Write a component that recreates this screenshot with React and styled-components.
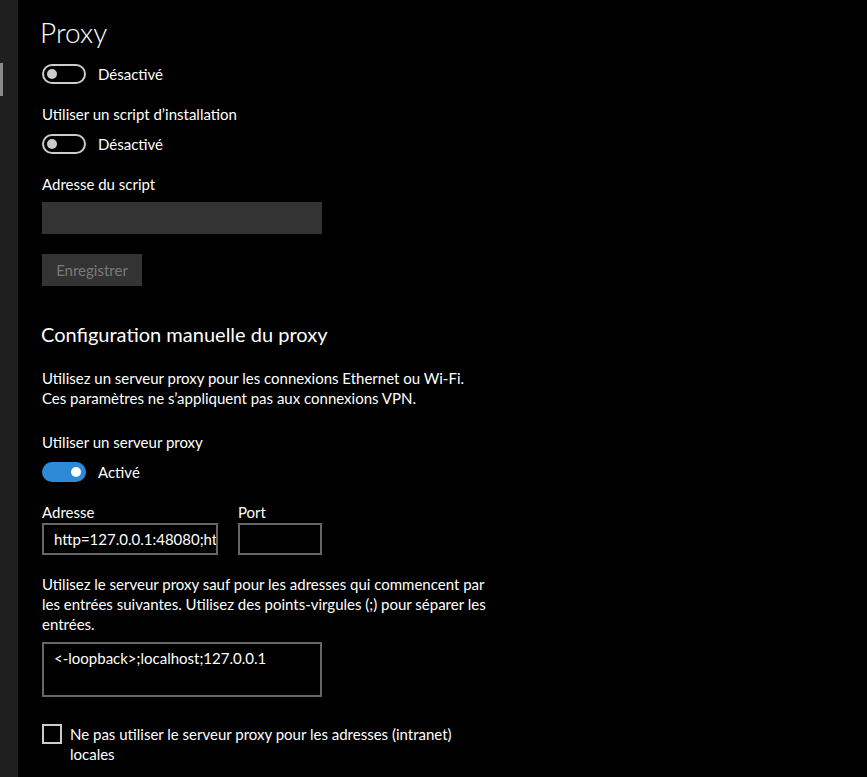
import React from "react";
import styled, { createGlobalStyle } from "styled-components";

const Global = createGlobalStyle`
  html, body { margin: 0; padding: 0; background: #000; }
  body { font-family: "Lato", "Open Sans", sans-serif; color: #fff; }
  * { box-sizing: border-box; }
`;

const Page = styled.div`
  display: flex;
  width: 867px;
  height: 777px;
  overflow: hidden;
  background: #000;
`;

const Sidebar = styled.div`
  width: 18px;
  flex: 0 0 18px;
  background: #1f1f1f;
  position: relative;
`;

const Indicator = styled.div`
  position: absolute;
  left: 0;
  top: 63px;
  width: 3px;
  height: 33px;
  background: #8a8a8a;
`;

const Main = styled.div`
  display: flex;
  flex-direction: column;
  align-items: flex-start;
  padding-left: 24px;
`;

const Title = styled.h1`
  margin: 14px 0 0 -2px;
  font-size: 28px;
  line-height: 36px;
  font-weight: 300;
`;

const Heading = styled.h2`
  margin: ${(p) => p.$mt}px 0 0 -1px;
  font-size: 20px;
  line-height: 28px;
  font-weight: 400;
`;

const Text = styled.div`
  margin-top: ${(p) => p.$mt}px;
  font-size: 15px;
  line-height: 20px;
  white-space: nowrap;
`;

const ToggleRow = styled.div`
  display: flex;
  align-items: center;
  gap: 12px;
  margin-top: ${(p) => p.$mt}px;
  font-size: 15px;
  line-height: 20px;
`;

const Track = styled.div`
  width: 44px;
  height: 20px;
  border-radius: 10px;
  border: 2px solid ${(p) => (p.$on ? "#2d8ad6" : "#cccccc")};
  background: ${(p) => (p.$on ? "#2d8ad6" : "transparent")};
  display: flex;
  align-items: center;
  justify-content: ${(p) => (p.$on ? "flex-end" : "flex-start")};
  padding: 0 3px;
`;

const Knob = styled.div`
  width: 10px;
  height: 10px;
  border-radius: 50%;
  background: ${(p) => (p.$on ? "#fff" : "#cccccc")};
`;

const FilledInput = styled.div`
  margin-top: ${(p) => p.$mt}px;
  width: 280px;
  height: 32px;
  background: #333333;
`;

const Button = styled.div`
  margin-top: ${(p) => p.$mt}px;
  width: 100px;
  height: 32px;
  background: #333333;
  color: #7a7a7a;
  font-size: 15px;
  display: flex;
  align-items: center;
  justify-content: center;
`;

const FieldRow = styled.div`
  display: flex;
  gap: 20px;
  margin-top: ${(p) => p.$mt}px;
`;

const Field = styled.div`
  display: flex;
  flex-direction: column;
  gap: 1px;
`;

const BoxInput = styled.div`
  width: ${(p) => p.$w}px;
  height: ${(p) => p.$h}px;
  border: 2px solid #666666;
  padding: ${(p) => p.$pt}px 10px 0 10px;
  font-size: 15px;
  line-height: 20px;
  white-space: nowrap;
  overflow: hidden;
  margin-top: ${(p) => p.$mt || 0}px;
`;

const CheckRow = styled.div`
  display: flex;
  align-items: flex-start;
  gap: 8px;
  margin-top: ${(p) => p.$mt}px;
  font-size: 15px;
  line-height: 20px;
`;

const Checkbox = styled.div`
  width: 20px;
  height: 20px;
  border: 2px solid #cccccc;
  flex: 0 0 20px;
`;

const Toggle = ({ on, label, mt }) => (
  <ToggleRow $mt={mt}>
    <Track $on={on}>
      <Knob $on={on} />
    </Track>
    <span>{label}</span>
  </ToggleRow>
);

export default function App() {
  return (
    <>
      <Global />
      <Page>
        <Sidebar>
          <Indicator />
        </Sidebar>
        <Main>
          <Title>Proxy</Title>
          <Toggle on={false} label="Désactivé" mt={14} />
          <Text $mt={20}>Utiliser un script d’installation</Text>
          <Toggle on={false} label="Désactivé" mt={10} />
          <Text $mt={20}>Adresse du script</Text>
          <FilledInput $mt={8} />
          <Button $mt={20}>Enregistrer</Button>
          <Heading $mt={34}>Configuration manuelle du proxy</Heading>
          <Text $mt={20}>
            Utilisez un serveur proxy pour les connexions Ethernet ou Wi-Fi.
            <br />
            Ces paramètres ne s’appliquent pas aux connexions VPN.
          </Text>
          <Text $mt={24}>Utiliser un serveur proxy</Text>
          <Toggle on={true} label="Activé" mt={10} />
          <FieldRow $mt={20}>
            <Field>
              <Text $mt={0}>Adresse</Text>
              <BoxInput $w={176} $h={32} $pt={4}>
                http=127.0.0.1:48080;ht
              </BoxInput>
            </Field>
            <Field>
              <Text $mt={0}>Port</Text>
              <BoxInput $w={84} $h={32} $pt={4} />
            </Field>
          </FieldRow>
          <Text $mt={19}>
            Utilisez le serveur proxy sauf pour les adresses qui commencent par
            <br />
            les entrées suivantes. Utilisez des points-virgules (;) pour séparer les
            <br />
            entrées.
          </Text>
          <BoxInput $w={280} $h={55} $pt={4} $mt={8}>
            &lt;-loopback&gt;;localhost;127.0.0.1
          </BoxInput>
          <CheckRow $mt={27}>
            <Checkbox />
            <Text $mt={0}>
              Ne pas utiliser le serveur proxy pour les adresses (intranet)
              <br />
              locales
            </Text>
          </CheckRow>
        </Main>
      </Page>
    </>
  );
}
